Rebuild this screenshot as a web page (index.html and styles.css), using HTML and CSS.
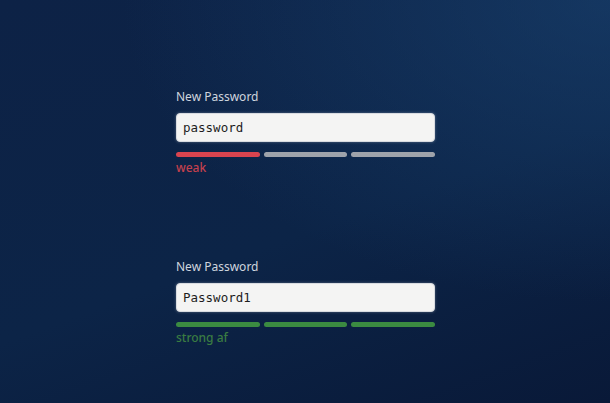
FILE: index.html
```html
<!DOCTYPE html>
<html lang="en">
<head>
    <meta charset="UTF-8">
    <title>Password Strength</title>
    <meta name="viewport" content="width=device-width, initial-scale=1.0">
    <link rel="stylesheet" href="styles.css">
</head>
<body>
    <div class="page">
        <div class="field">
            <label class="label" for="pw1">New Password</label>
            <input class="input" id="pw1" type="text" value="password">
            <div class="meter">
                <span class="seg weak"></span>
                <span class="seg"></span>
                <span class="seg"></span>
            </div>
            <div class="hint weak-text">weak</div>
        </div>

        <div class="field">
            <label class="label" for="pw2">New Password</label>
            <input class="input" id="pw2" type="text" value="Password1">
            <div class="meter">
                <span class="seg strong"></span>
                <span class="seg strong"></span>
                <span class="seg strong"></span>
            </div>
            <div class="hint strong-text">strong af</div>
        </div>
    </div>
</body>
</html>
```

FILE: styles.css
```css
html, body {
    margin: 0;
    height: 100%;
}

body {
    background:
        radial-gradient(ellipse 80% 75% at 100% 0%, rgba(26, 68, 115, 0.6), rgba(26, 68, 115, 0) 100%),
        linear-gradient(160deg, #0d2246 0%, #0c2447 55%, #091938 100%);
    font-family: "Noto Sans", "Open Sans", sans-serif;
    color: #d0d6df;
    overflow: hidden;
}

.page {
    padding: 89px 0 0 176px;
    display: flex;
    flex-direction: column;
    gap: 83px;
}

.field {
    width: 259px;
    display: flex;
    flex-direction: column;
}

.label {
    font-size: 12px;
    line-height: 16px;
    color: #cfd5de;
    margin-bottom: 8px;
}

.input {
    box-sizing: border-box;
    width: 259px;
    height: 29px;
    margin: 0;
    padding: 0 6px;
    border: 1px solid #d8dbe0;
    border-radius: 4px;
    background: #f4f4f3;
    box-shadow: 0 0 3px rgba(255, 255, 255, 0.3);
    font-family: "DejaVu Sans Mono", monospace;
    font-size: 12.5px;
    color: #1d1d1d;
    outline: none;
}

.meter {
    display: flex;
    gap: 4px;
    margin-top: 10px;
}

.seg {
    flex: 1;
    height: 5px;
    border-radius: 3px;
    background: #9ea3ab;
}

.seg.weak {
    background: #d9444f;
}

.seg.strong {
    background: #3b8b41;
}

.hint {
    font-size: 12px;
    line-height: 16px;
    margin-top: 3px;
    font-weight: 500;
}

.weak-text {
    color: #c4404d;
}

.strong-text {
    color: #3a7c42;
}
```
